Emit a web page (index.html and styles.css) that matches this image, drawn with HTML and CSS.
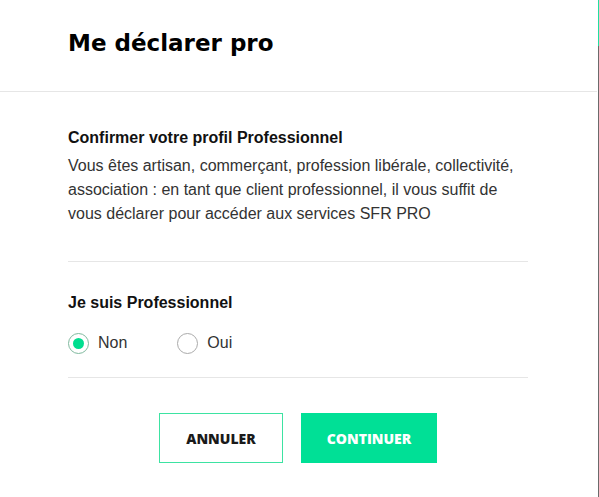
FILE: index.html
```html
<!DOCTYPE html>
<html lang="fr">
<head>
<meta charset="utf-8">
<title>Me déclarer pro</title>
<link rel="stylesheet" href="styles.css">
</head>
<body>
<div class="modal">
  <header class="modal-head">
    <h1 class="title">Me déclarer pro</h1>
  </header>
  <main class="modal-body">
    <section class="intro">
      <h2 class="subtitle">Confirmer votre profil Professionnel</h2>
      <p class="text">Vous êtes artisan, commerçant, profession libérale, collectivité, association : en tant que client professionnel, il vous suffit de vous déclarer pour accéder aux services SFR PRO</p>
    </section>
    <section class="choice">
      <h2 class="subtitle">Je suis Professionnel</h2>
      <div class="radios">
        <label class="radio"><span class="dot checked"></span>Non</label>
        <label class="radio"><span class="dot"></span>Oui</label>
      </div>
    </section>
    <div class="actions">
      <button class="btn btn-outline">ANNULER</button>
      <button class="btn btn-fill">CONTINUER</button>
    </div>
  </main>
  <div class="scroll"><div class="thumb"></div></div>
</div>
</body>
</html>
```

FILE: styles.css
```css
* { box-sizing: border-box; }
html, body { margin: 0; padding: 0; background: #fff; }
body { width: 599px; height: 497px; overflow: hidden; font-family: "Liberation Sans", Arial, sans-serif; color: #333; }
.modal { position: relative; width: 599px; height: 497px; }
.modal-head { height: 92px; border-bottom: 1px solid #e6e6e6; padding: 28px 0 0 68px; margin-right: 2px; }
.title { margin: 0; font-family: "DejaVu Sans", sans-serif; font-weight: 700; font-size: 23px; line-height: 30px; color: #000; letter-spacing: 0; }
.modal-body { padding: 0 71px 0 68px; }
.intro { padding: 36px 0 35px; border-bottom: 1px solid #e6e6e6; }
.subtitle { margin: 0; font-size: 16px; font-weight: 700; line-height: 20px; color: #111; }
.text { margin: 6px 0 0; font-size: 16px; line-height: 24px; color: #333; }
.choice { padding: 31px 0 23px; border-bottom: 1px solid #e6e6e6; }
.radios { display: flex; gap: 50px; margin-top: 19px; }
.radio { display: flex; align-items: center; gap: 9px; font-size: 16px; color: #333; line-height: 22px; }
.dot { width: 21px; height: 21px; border-radius: 50%; border: 1px solid #aaa; display: flex; align-items: center; justify-content: center; }
.dot.checked { border-color: #7fb99e; }
.dot.checked::after { content: ""; width: 11px; height: 11px; border-radius: 50%; background: #00de8f; }
.actions { display: flex; justify-content: center; gap: 18px; padding-top: 35px; }
.btn { width: 124px; height: 50px; font-family: "Open Sans", sans-serif; font-weight: 800; font-size: 14px; letter-spacing: 0; border: 1px solid #3de3a2; background: #fff; color: #1a1a1a; padding: 0; }
.btn-fill { width: 136px; background: #00e096; border-color: #00e096; color: #fff; }
.scroll { position: absolute; top: 0; right: 0; width: 1px; height: 497px; background: #6b6b6b; }
.thumb { height: 46px; background: #1fe0a0; }
```
